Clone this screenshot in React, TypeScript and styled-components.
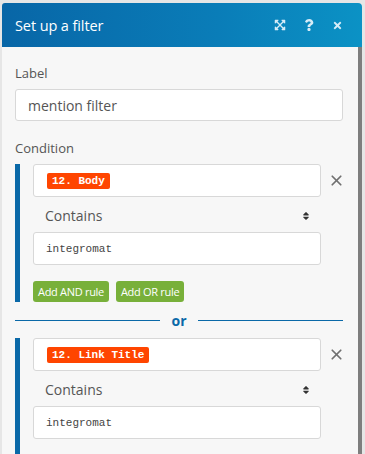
import styled, { createGlobalStyle } from "styled-components";
import { FaExpandArrowsAlt, FaQuestion, FaTimes, FaSort } from "react-icons/fa";
import { X } from "lucide-react";

const GlobalStyle = createGlobalStyle`
  html, body {
    margin: 0;
    padding: 0;
  }
  body {
    background: #e8e8e8;
    font-family: "Open Sans", "Noto Sans", sans-serif;
  }
`;

const Page = styled.div`
  width: 365px;
  height: 454px;
  box-sizing: border-box;
  padding: 3px 0 0 2px;
  overflow: hidden;
  background: #e6e6e6;
`;

const Window = styled.div`
  width: 360px;
  height: 100%;
  display: flex;
  flex-direction: column;
  border-radius: 3px 4px 0 0;
  overflow: hidden;
`;

const Header = styled.div`
  height: 44px;
  flex-shrink: 0;
  display: flex;
  align-items: center;
  padding: 0 19px 0 13px;
  background: linear-gradient(90deg, #0866a7 0%, #0a7db8 60%, #0b92c5 100%);
  color: #fff;
`;

const Title = styled.div`
  flex: 1;
  font-size: 14.5px;
  letter-spacing: -0.1px;
`;

const HeaderTools = styled.div`
  display: flex;
  align-items: center;
  gap: 17px;
  color: #d6ecf7;
`;

const Body = styled.div`
  flex: 1;
  display: flex;
  min-height: 0;
`;

const Content = styled.div`
  flex: 1;
  background: #f7f7f7;
  padding: 17px 15px 0 13px;
  overflow: hidden;
`;

const Scrollbar = styled.div`
  width: 4px;
  background: #7e7e7e;
`;

const FieldLabel = styled.div<{ $gapTop?: number }>`
  font-size: 13px;
  line-height: 18px;
  color: #555;
  margin-top: ${({ $gapTop }) => $gapTop ?? 0}px;
  margin-bottom: 7px;
`;

const TextInput = styled.div`
  height: 32px;
  box-sizing: border-box;
  display: flex;
  align-items: center;
  padding: 0 12px;
  background: #fff;
  border: 1px solid #d8d8d8;
  border-radius: 3px;
  font-size: 14px;
  color: #555;
`;

const RuleGroup = styled.div`
  border-left: 5px solid #0a69a8;
  padding-left: 13px;
`;

const Rule = styled.div`
  display: grid;
  grid-template-columns: 288px 1fr;
  align-items: center;
`;

const Box = styled.div`
  height: 33px;
  box-sizing: border-box;
  display: flex;
  align-items: center;
  padding: 0 13px;
  background: #fff;
  border: 1px solid #d8d8d8;
  border-radius: 3px;
`;

const Tag = styled.span`
  height: 16px;
  display: inline-flex;
  align-items: center;
  padding: 0 5px;
  border-radius: 2px;
  background: #ff4500;
  color: #fff;
  font-family: "Liberation Mono", monospace;
  font-weight: bold;
  font-size: 11px;
`;

const RemoveButton = styled.div`
  justify-self: start;
  margin-left: 7px;
  display: flex;
  color: #707070;
`;

const Operator = styled.div`
  grid-column: 1;
  height: 35px;
  display: flex;
  align-items: center;
  justify-content: space-between;
  padding: 2px 10px 0 12px;
  box-sizing: border-box;
  font-size: 14px;
  color: #555;

  svg {
    color: #333;
  }
`;

const Value = styled(Box)`
  grid-column: 1;
  padding: 0 12px;
  font-family: "Liberation Mono", monospace;
  font-size: 11px;
  color: #444;
`;

const Actions = styled.div`
  display: flex;
  gap: 7px;
  margin-top: 16px;
`;

const GroupTail = styled.div`
  height: 20px;
`;

const RuleButton = styled.button`
  height: 21px;
  padding: 0 5px;
  border: none;
  border-radius: 3px;
  background: #78b03a;
  color: #fff;
  font-family: "Open Sans", "Noto Sans", sans-serif;
  font-size: 11px;
  letter-spacing: -0.3px;
`;

const Divider = styled.div`
  height: 36px;
  display: flex;
  align-items: center;
  gap: 11px;
  color: #0a69a8;
  font-weight: bold;
  font-size: 14px;

  &::before,
  &::after {
    content: "";
    flex: 1;
    height: 1px;
    background: #0a69a8;
  }
`;

interface Condition {
  field: string;
  operator: string;
  value: string;
}

const groups: Condition[] = [
  { field: "12. Body", operator: "Contains", value: "integromat" },
  { field: "12. Link Title", operator: "Contains", value: "integromat" },
];

function ConditionGroup({ condition, showActions }: { condition: Condition; showActions: boolean }) {
  return (
    <RuleGroup>
      <Rule>
        <Box>
          <Tag>{condition.field}</Tag>
        </Box>
        <RemoveButton>
          <X size={17} strokeWidth={2.4} />
        </RemoveButton>
        <Operator>
          {condition.operator}
          <FaSort size={10} />
        </Operator>
        <Value>{condition.value}</Value>
      </Rule>
      {showActions ? (
        <Actions>
          <RuleButton>Add AND rule</RuleButton>
          <RuleButton>Add OR rule</RuleButton>
        </Actions>
      ) : (
        <GroupTail />
      )}
    </RuleGroup>
  );
}

export default function App() {
  return (
    <>
      <GlobalStyle />
      <Page>
        <Window>
          <Header>
            <Title>Set up a filter</Title>
            <HeaderTools>
              <FaExpandArrowsAlt size={12} />
              <FaQuestion size={12} />
              <FaTimes size={11} />
            </HeaderTools>
          </Header>
          <Body>
            <Content>
              <FieldLabel>Label</FieldLabel>
              <TextInput>mention filter</TextInput>
              <FieldLabel $gapTop={18}>Condition</FieldLabel>
              {groups.map((g, i) => (
                <div key={i}>
                  {i > 0 && <Divider>or</Divider>}
                  <ConditionGroup condition={g} showActions={i < groups.length - 1} />
                </div>
              ))}
            </Content>
            <Scrollbar />
          </Body>
        </Window>
      </Page>
    </>
  );
}
